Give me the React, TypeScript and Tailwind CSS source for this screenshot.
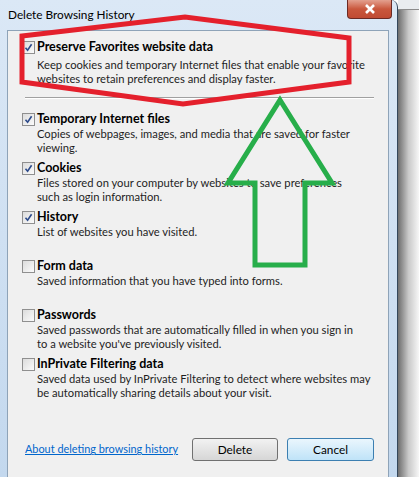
import React from "react";

interface Item {
  label: string;
  desc: string[];
  checked: boolean;
}

const items: Item[] = [
  {
    label: "Temporary Internet files",
    desc: ["Copies of webpages, images, and media that are saved for faster", "viewing."],
    checked: true,
  },
  {
    label: "Cookies",
    desc: ["Files stored on your computer by websites to save preferences", "such as login information."],
    checked: true,
  },
  { label: "History", desc: ["List of websites you have visited."], checked: true },
  { label: "Form data", desc: ["Saved information that you have typed into forms."], checked: false },
  {
    label: "Passwords",
    desc: ["Saved passwords that are automatically filled in when you sign in", "to a website you've previously visited."],
    checked: false,
  },
  {
    label: "InPrivate Filtering data",
    desc: ["Saved data used by InPrivate Filtering to detect where websites may", "be automatically sharing details about your visit."],
    checked: false,
  },
];

function Check({ on }: { on: boolean }) {
  return (
    <div className="w-[13px] h-[13px] border border-[#8f8f8f] bg-gradient-to-br from-[#dcdcdc] to-[#fbfbfb] flex items-center justify-center shrink-0">
      {on && (
        <svg width="9" height="9" viewBox="0 0 9 9">
          <path d="M1.5 4.8 L3.6 7.2 L7.6 1.2" stroke="#2c4a8a" strokeWidth="1.6" fill="none" />
        </svg>
      )}
    </div>
  );
}

function Group({ item }: { item: Item }) {
  return (
    <div className="h-[49px] flex flex-col">
      <div className="flex items-center gap-[2px] h-[16px]">
        <Check on={item.checked} />
        <span className="font-bold text-[12.5px] leading-[16px] text-black whitespace-nowrap">{item.label}</span>
      </div>
      <div className="pl-[15px] text-[11.2px] leading-[14px] text-[#1e1e1e] whitespace-nowrap">
        {item.desc.map((d) => (
          <div key={d}>{d}</div>
        ))}
      </div>
    </div>
  );
}

export default function App() {
  return (
    <div
      className="w-[419px] h-[477px] relative overflow-hidden bg-white flex"
      style={{ fontFamily: 'Lato, "Liberation Sans", sans-serif' }}
    >
      {/* dialog window */}
      <div className="w-[398px] h-full bg-gradient-to-b from-[#dbe8f6] to-[#c3d8ee] border-r border-[#34475b] rounded-tr-[7px] flex flex-col pl-[7px] pr-[8px] shrink-0">
        <div className="h-[30px] flex items-center pl-[1px] text-[11.8px] text-black">Delete Browsing History</div>
        <div className="flex-1 bg-[#f0f0f0] border border-[#8ea3b8] border-b-0 pl-[14px] pt-[8px] flex flex-col">
          {/* preserve favorites */}
          <div className="flex flex-col">
            <div className="flex items-center gap-[2px] h-[16px]">
              <Check on={true} />
              <span className="font-bold text-[12.5px] leading-[16px] text-black whitespace-nowrap">
                Preserve Favorites website data
              </span>
            </div>
            <div className="pl-[15px] pt-[3px] text-[11.2px] leading-[14px] text-[#1e1e1e] whitespace-nowrap">
              <div>Keep cookies and temporary Internet files that enable your favorite</div>
              <div>websites to retain preferences and display faster.</div>
            </div>
          </div>
          <div className="mt-[11px] ml-[3px] w-[349px] h-[1px] bg-[#a0a0a0] border-b border-white box-content" />
          <div className="mt-[12px] flex flex-col">
            {items.map((it) => (
              <Group key={it.label} item={it} />
            ))}
          </div>
          <div className="mt-[33px] flex items-center">
            <a className="ml-[3px] text-[10.9px] text-[#0066cc] underline w-[167px] whitespace-nowrap">
              About deleting browsing history
            </a>
            <button className="w-[86px] h-[23px] rounded-[3px] border border-[#707070] bg-gradient-to-b from-[#f2f2f2] to-[#d6d6d6] text-[11.8px] text-black">
              Delete
            </button>
            <button className="ml-[9px] w-[87px] h-[23px] rounded-[3px] border border-[#3c7fb1] bg-gradient-to-b from-[#eaf6fd] to-[#bfe3f8] text-[11.8px] text-black">
              Cancel
            </button>
          </div>
        </div>
      </div>
      {/* background beside the window */}
      <div className="flex-1 flex flex-col">
        <div className="h-[10px] bg-[#e9ecef] border-b border-[#8c8c8c]" />
        <div className="flex-1 bg-gradient-to-r from-[#6e6e6e] via-[#c9c9c9] to-[#f7f7f7]" />
      </div>

      {/* close button */}
      <div className="absolute left-[347px] top-0 w-[45px] h-[19px] rounded-b-[4px] border border-[#6b2a24] border-t-0 bg-gradient-to-b from-[#e3a08f] via-[#c9573d] to-[#c04a33] flex items-center justify-center">
        <svg width="12" height="10" viewBox="0 0 12 10">
          <path d="M2 1 L10 9 M10 1 L2 9" stroke="white" strokeWidth="2.6" />
        </svg>
      </div>

      {/* annotations */}
      <svg className="absolute left-0 top-0 pointer-events-none" width="419" height="477">
        <polygon
          points="22,36 185,17 349,38 349,82 183,104 22,82"
          fill="none"
          stroke="#e4202c"
          strokeWidth="5"
          strokeLinejoin="miter"
        />
        <polygon
          points="280,100 332,183 305,183 305,265 255,265 255,183 228,183"
          fill="none"
          stroke="#27ae4a"
          strokeWidth="5"
          strokeLinejoin="miter"
        />
      </svg>
    </div>
  );
}
